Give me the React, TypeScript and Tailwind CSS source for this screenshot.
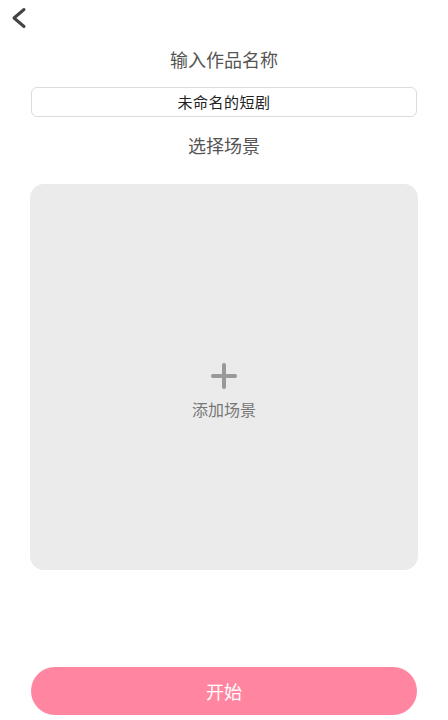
export default function App() {
  const font = { fontFamily: '"Noto Sans CJK SC", "Noto Sans", sans-serif' };
  return (
    <div className="w-[448px] h-[720px] bg-white flex flex-col" style={font}>
      <div className="h-[40px] relative">
        <svg className="absolute left-[9px] top-[6px]" width="22" height="24" viewBox="0 0 22 24" fill="none">
          <path d="M15 3.5 L5 12 L15 20.5" stroke="#444" strokeWidth="3" strokeLinecap="round" strokeLinejoin="round" />
        </svg>
      </div>
      <div className="mt-[7px] h-[24px] leading-[24px] text-center text-[18px] text-[#555]">输入作品名称</div>
      <div className="mt-[16px] mx-[31px] h-[30px] rounded-[6px] border border-[#dcdcdc] flex items-center justify-center text-[15px] tracking-[0.5px] text-[#222]">
        未命名的短剧
      </div>
      <div className="mt-[16px] h-[24px] leading-[24px] text-center text-[18px] text-[#555]">选择场景</div>
      <div className="mt-[27px] ml-[30px] w-[388px] h-[386px] rounded-[14px] bg-[#ebebeb] flex flex-col items-center justify-center pt-[28px]">
        <svg width="26" height="26" viewBox="0 0 26 26">
          <path d="M13 2 V24 M2 13 H24" stroke="#999" strokeWidth="4" strokeLinecap="round" />
        </svg>
        <div className="mt-[10px] text-[16px] text-[#777] leading-[20px]">添加场景</div>
      </div>
      <div className="flex-1" />
      <button className="mb-[5px] mx-[31px] h-[48px] rounded-full bg-[#ff85a0] text-white text-[18px]">开始</button>
    </div>
  );
}
